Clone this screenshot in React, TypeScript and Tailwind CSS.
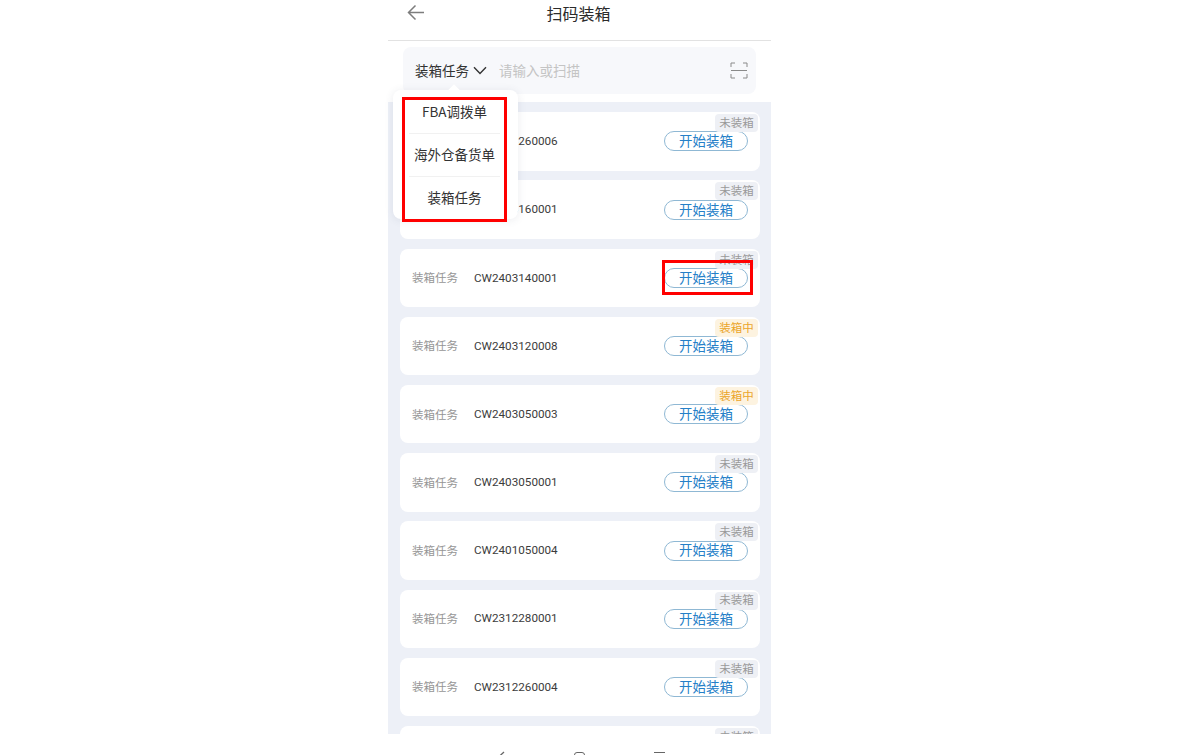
const tasks = [
  { code: "CW2403260006", status: "未装箱" },
  { code: "CW2403160001", status: "未装箱" },
  { code: "CW2403140001", status: "未装箱" },
  { code: "CW2403120008", status: "装箱中" },
  { code: "CW2403050003", status: "装箱中" },
  { code: "CW2403050001", status: "未装箱" },
  { code: "CW2401050004", status: "未装箱" },
  { code: "CW2312280001", status: "未装箱" },
  { code: "CW2312260004", status: "未装箱" },
  { code: "CW2312260003", status: "未装箱" },
];

const menuItems = ["FBA调拨单", "海外仓备货单", "装箱任务"];

function TaskCard({ code, status }: { code: string; status: string }) {
  const packing = status === "装箱中";
  return (
    <div className="relative flex h-[58.3px] shrink-0 items-center rounded-[8px] bg-white pl-3 pr-3">
      <span className="w-[62px] text-[11.5px] text-[#969696]">装箱任务</span>
      <span className="pt-[1px] text-[11.7px] text-[#3c3c3c] [font-family:Roboto,'Noto_Sans_CJK_SC',sans-serif]">{code}</span>
      <button className="ml-auto flex h-[20px] w-[84px] items-center justify-center rounded-full border border-[#8fb8d4] pb-[2px] text-[13.5px] text-[#2580c8]">
        开始装箱
      </button>
      <span
        className={
          packing
            ? "absolute right-[2px] top-[2px] flex h-[18px] w-[43px] items-center justify-center rounded-[4px] bg-[#fdf3e0] pb-[1px] text-[11.5px] text-[#eba52b]"
            : "absolute right-[2px] top-[2px] flex h-[18px] w-[43px] items-center justify-center rounded-[4px] bg-[#eef0f5] pb-[1px] text-[11.5px] text-[#9a9a9a]"
        }
      >
        {status}
      </span>
    </div>
  );
}

export default function App() {
  return (
    <div className="relative flex h-[755px] w-full overflow-hidden bg-white pl-[388px] [font-family:'Noto_Sans_CJK_SC','Noto_Sans',sans-serif]">
      <div className="flex h-full w-[383px] flex-col">
        <header className="relative flex h-[41px] shrink-0 justify-center border-b border-[#e2e2e2] pr-[2px] pt-[1px]">
          <svg className="absolute left-[19px] top-[4px]" width="18" height="17" viewBox="0 0 18 17" fill="none" stroke="#7d7d7d" strokeWidth="1.5">
            <path d="M17 8.5H2M8.5 1.5 1.5 8.5l7 7" />
          </svg>
          <h1 className="text-[16px] leading-[24px] text-[#2b2b2b]">扫码装箱</h1>
        </header>

        <div className="flex h-[61px] shrink-0 items-start pl-[15px] pt-[6px]">
          <div className="flex h-[47px] w-[353px] items-center rounded-[8px] bg-[#f7f8fb] pb-[1px] pl-3 pr-2">
            <span className="text-[13.5px] text-[#333]">装箱任务</span>
            <svg className="ml-[4px]" width="14" height="9" viewBox="0 0 14 9" fill="none" stroke="#333" strokeWidth="1.4">
              <path d="M1 1.2 7 7.5l6-6.3" />
            </svg>
            <span className="ml-[12px] text-[13.5px] text-[#c4c4c4]">请输入或扫描</span>
            <svg className="ml-auto" width="18" height="17" viewBox="0 0 18 17" fill="none" stroke="#8a8a8a" strokeWidth="1">
              <path d="M1 5V1h4M13 1h4v4M1 12v4h4M13 16h4v-4M1 8.5h16" />
            </svg>
          </div>
        </div>

        <main className="flex min-h-0 flex-1 flex-col gap-[9.9px] overflow-hidden bg-[#edf0f7] pl-3 pr-[11px] pt-[10.3px]">
          {tasks.map((task) => (
            <TaskCard key={task.code} code={task.code} status={task.status} />
          ))}
        </main>

        <nav className="relative h-[21px] shrink-0 overflow-hidden bg-white">
          <svg className="absolute left-[108px] top-[17px]" width="10" height="14" viewBox="0 0 10 14" fill="none" stroke="#666" strokeWidth="1.3">
            <path d="M8 1 1 7.5 8 14" />
          </svg>
          <div className="absolute left-[186px] top-[18px] h-[12px] w-[11px] rounded-[3px] border border-[#666]" />
          <div className="absolute left-[266px] top-[18px] h-px w-[11px] bg-[#666]" />
        </nav>
      </div>

      {/* dropdown over the list */}
      <div className="absolute left-[393px] top-[90px] flex h-[129px] w-[125px] flex-col rounded-[8px] bg-white pl-[16px] pr-[18px] shadow-[0_1px_8px_rgba(60,70,100,0.1)]">
        <div className="absolute left-[57px] top-[-4px] h-[8px] w-[8px] rotate-45 bg-white" />
        {menuItems.map((item, i) => (
          <div
            key={item}
            className={
              i < 2
                ? "relative flex h-[43.5px] items-center justify-center whitespace-nowrap border-b border-[#f1f1f1] pb-[1px] text-[13.5px] text-[#333]"
                : "relative flex h-[42px] items-center justify-center whitespace-nowrap pb-[1px] text-[13.5px] text-[#333]"
            }
          >
            {item}
          </div>
        ))}
      </div>

      {/* red annotation boxes */}
      <div className="absolute left-[402px] top-[97px] h-[125px] w-[105px] border-[3px] border-[#ff0000]" />
      <div className="absolute left-[662px] top-[260px] h-[35px] w-[91px] border-[3px] border-[#ff0000]" />
    </div>
  );
}
